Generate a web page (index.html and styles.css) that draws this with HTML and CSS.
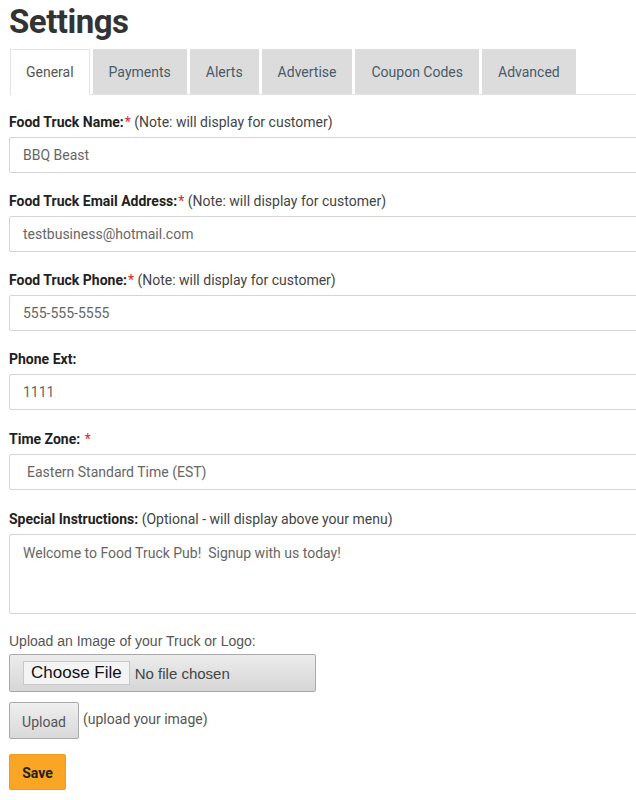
FILE: index.html
```html
<!DOCTYPE html>
<html lang="en">
<head>
    <meta charset="UTF-8">
    <title>Settings</title>
    <link rel="stylesheet" href="styles.css">
</head>
<body>
<div class="page">

<h1>Settings</h1>

<ul class="tabs">
    <li class="tab active">General</li>
    <li class="tab">Payments</li>
    <li class="tab">Alerts</li>
    <li class="tab">Advertise</li>
    <li class="tab">Coupon Codes</li>
    <li class="tab">Advanced</li>
</ul>

<form class="settings-form">
    <div class="field">
        <label><strong>Food Truck Name:</strong><span class="req">*</span> (Note: will display for customer)</label>
        <input type="text" value="BBQ Beast">
    </div>
    <div class="field">
        <label><strong>Food Truck Email Address:</strong><span class="req">*</span> (Note: will display for customer)</label>
        <input type="text" value="testbusiness@hotmail.com">
    </div>
    <div class="field">
        <label><strong>Food Truck Phone:</strong><span class="req">*</span> (Note: will display for customer)</label>
        <input type="text" value="555-555-5555">
    </div>
    <div class="field">
        <label><strong>Phone Ext:</strong></label>
        <input type="text" value="1111">
    </div>
    <div class="field">
        <label><strong>Time Zone:</strong> <span class="req">*</span></label>
        <div class="select-box">Eastern Standard Time (EST)</div>
    </div>
    <div class="field">
        <label><strong>Special Instructions:</strong> (Optional - will display above your menu)</label>
        <textarea>Welcome to Food Truck Pub!  Signup with us today!</textarea>
    </div>

    <div class="upload">
        <p class="upload-label">Upload an Image of your Truck or Logo:</p>
        <div class="file-box">
            <span class="file-btn">Choose File</span>
            <span class="file-name">No file chosen</span>
        </div>
        <div class="upload-row">
            <button type="button" class="btn-upload">Upload</button>
            <span class="upload-note">(upload your image)</span>
        </div>
    </div>

    <button type="button" class="btn-save">Save</button>
</form>

</div>
</body>
</html>
```

FILE: styles.css
```css
body {
    font-family: Roboto, "Liberation Sans", sans-serif;
    font-size: 14px;
    color: #333;
    margin: 0;
}
.page {
    overflow: hidden;
    padding-left: 9px;
}
.page > * {
    width: 650px;
}
h1 {
    font-size: 33px;
    font-weight: bold;
    color: #333;
    margin: 0;
    padding-top: 1px;
    line-height: 42px;
    letter-spacing: -0.5px;
}
.tabs {
    list-style: none;
    display: flex;
    gap: 3px;
    margin: 6px 0 0 1px;
    padding: 0;
    border-bottom: 1px solid #e4e4e4;
}
.tab {
    background-color: #dcdcdc;
    color: #4a5a68;
    height: 44px;
    line-height: 44px;
    padding: 0 15px;
    font-size: 14px;
    border: 1px solid #dcdcdc;
    border-bottom: none;
    margin-bottom: -1px;
}
.tab.active {
    background-color: #fff;
    color: #555;
    border-color: #e4e4e4;
    height: 45px;
    padding: 0 15px;
}
.settings-form {
    margin-top: 17px;
}
.field {
    margin-bottom: 18px;
}
.field:nth-child(4),
.field:nth-child(5) {
    margin-bottom: 19px;
}
.field label {
    display: block;
    color: #444;
    line-height: 20px;
    margin-bottom: 5px;
}
.field label strong {
    color: #222;
}
.req {
    color: #e02424;
    margin-left: 1px;
}
.field input,
.field textarea,
.select-box {
    display: block;
    box-sizing: border-box;
    width: 100%;
    height: 36px;
    border: 1px solid #d4d4d4;
    border-radius: 2px;
    padding: 0 13px;
    font-family: Roboto, "Liberation Sans", sans-serif;
    font-size: 14px;
    color: #666;
    background: #fff;
    margin: 0;
}
.select-box {
    line-height: 34px;
    padding-left: 17px;
}
.field textarea {
    height: 80px;
    padding-top: 9px;
    resize: none;
    line-height: 18px;
}
.upload-label {
    font-family: "Liberation Sans", Arial, sans-serif;
    color: #555;
    margin: 0 0 4px;
    line-height: 18px;
}
.file-box {
    box-sizing: border-box;
    width: 307px;
    height: 38px;
    border: 1px solid #aaa;
    border-radius: 2px;
    background: linear-gradient(#ececec, #d6d6d6);
    display: flex;
    align-items: center;
    padding-left: 13px;
}
.file-btn {
    font-family: "Liberation Sans", Arial, sans-serif;
    font-size: 17px;
    color: #111;
    background: #f4f4f4;
    border: 1px solid #c8c8c8;
    padding: 1px 7px;
    line-height: 20px;
}
.file-name {
    font-family: "Liberation Sans", Arial, sans-serif;
    font-size: 15px;
    color: #444;
    margin-left: 5px;
}
.upload-row {
    display: flex;
    align-items: center;
    margin-top: 10px;
}
.btn-upload {
    width: 70px;
    height: 37px;
    border: 1px solid #aaa;
    border-radius: 2px;
    background: linear-gradient(#efefef, #d9d9d9);
    font-family: Roboto, "Liberation Sans", sans-serif;
    font-size: 14px;
    color: #555;
    padding: 3px 0 0;
}
.upload-note {
    color: #555;
    margin-left: 4px;
    margin-top: -3px;
}
.btn-save {
    margin-top: 15px;
    width: 57px;
    height: 36px;
    border: 1px solid #ee9a20;
    border-radius: 2px;
    background: #f9a525;
    font-family: Roboto, "Liberation Sans", sans-serif;
    font-weight: bold;
    font-size: 14px;
    color: #222;
    padding: 2px 0 0;
}
```
